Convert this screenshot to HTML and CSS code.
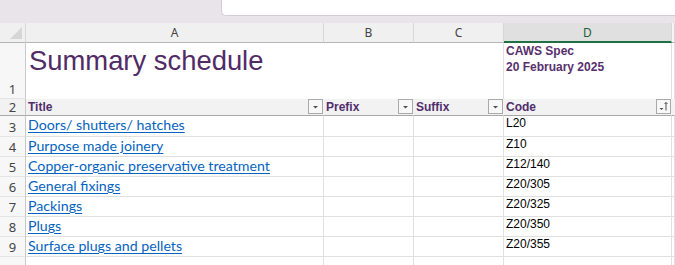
FILE: index.html
```html
<!DOCTYPE html>
<html lang="en">
<head>
<meta charset="utf-8">
<title>Summary schedule</title>
<link rel="stylesheet" href="styles.css">
</head>
<body>
<div class="app">
  <div class="topbar"><div class="formula"></div></div>
  <div class="sheet">
    <div class="row colheads">
      <div class="corner"><svg width="12" height="12" viewBox="0 0 12 12"><polygon points="0,12 12,0 12,12" fill="#d6d6d6"/></svg></div>
      <div class="ch">A</div>
      <div class="ch">B</div>
      <div class="ch">C</div>
      <div class="ch sel">D</div>
      <div class="ch last"></div>
    </div>

    <div class="row r1">
      <div class="rh">1</div>
      <div class="c span3"><span class="title">Summary schedule</span></div>
      <div class="c meta">CAWS Spec<br>20 February 2025</div>
      <div class="c last"></div>
    </div>

    <div class="row r2">
      <div class="rh">2</div>
      <div class="c th"><span>Title</span><span class="flt"><svg width="13" height="13" viewBox="0 0 13 13"><polygon points="4,6 9,6 6.5,8.5" fill="#505050"/></svg></span></div>
      <div class="c th"><span>Prefix</span><span class="flt"><svg width="13" height="13" viewBox="0 0 13 13"><polygon points="4,6 9,6 6.5,8.5" fill="#505050"/></svg></span></div>
      <div class="c th"><span>Suffix</span><span class="flt"><svg width="13" height="13" viewBox="0 0 13 13"><polygon points="4,6 9,6 6.5,8.5" fill="#505050"/></svg></span></div>
      <div class="c th"><span>Code</span><span class="flt"><svg width="13" height="13" viewBox="0 0 13 13"><polygon points="2.5,8 6.5,8 4.5,10" fill="#505050"/><path d="M9 2.5 V10.5 M7.5 4 L9 2.5 L10.5 4" stroke="#505050" stroke-width="1" fill="none"/></svg></span></div>
      <div class="c th last"><span class="peek">N</span></div>
    </div>

    <div class="row r3">
      <div class="rh">3</div>
      <div class="c"><a class="lnk" href="#">Doors/ shutters/ hatches</a></div>
      <div class="c"></div><div class="c"></div>
      <div class="c code">L20</div>
      <div class="c last"></div>
    </div>
    <div class="row">
      <div class="rh">4</div>
      <div class="c"><a class="lnk" href="#">Purpose made joinery</a></div>
      <div class="c"></div><div class="c"></div>
      <div class="c code">Z10</div>
      <div class="c last"></div>
    </div>
    <div class="row">
      <div class="rh">5</div>
      <div class="c"><a class="lnk" href="#">Copper-organic preservative treatment</a></div>
      <div class="c"></div><div class="c"></div>
      <div class="c code">Z12/140</div>
      <div class="c last"></div>
    </div>
    <div class="row">
      <div class="rh">6</div>
      <div class="c"><a class="lnk" href="#">General fixings</a></div>
      <div class="c"></div><div class="c"></div>
      <div class="c code">Z20/305</div>
      <div class="c last"></div>
    </div>
    <div class="row">
      <div class="rh">7</div>
      <div class="c"><a class="lnk" href="#">Packings</a></div>
      <div class="c"></div><div class="c"></div>
      <div class="c code">Z20/325</div>
      <div class="c last"></div>
    </div>
    <div class="row">
      <div class="rh">8</div>
      <div class="c"><a class="lnk" href="#">Plugs</a></div>
      <div class="c"></div><div class="c"></div>
      <div class="c code">Z20/350</div>
      <div class="c last"></div>
    </div>
    <div class="row">
      <div class="rh">9</div>
      <div class="c"><a class="lnk" href="#">Surface plugs and pellets</a></div>
      <div class="c"></div><div class="c"></div>
      <div class="c code">Z20/355</div>
      <div class="c last"></div>
    </div>
    <div class="row">
      <div class="rh top">10</div>
      <div class="c"></div>
      <div class="c"></div><div class="c"></div>
      <div class="c"></div>
      <div class="c last"></div>
    </div>
  </div>
</div>
</body>
</html>
```
FILE: styles.css
```css
* { box-sizing: border-box; }
html, body { margin: 0; padding: 0; }
body {
  width: 675px;
  height: 265px;
  overflow: hidden;
  background: #ffffff;
  font-family: "Liberation Sans", Arial, sans-serif;
}
.app { width: 675px; height: 265px; overflow: hidden; }

.topbar {
  height: 23px;
  background: #e9e4ea;
  padding-left: 221px;
}
.formula {
  height: 16px;
  background: #ffffff;
  border-left: 1px solid #d3ccd5;
  border-bottom: 1px solid #d3ccd5;
  border-bottom-left-radius: 5px;
}

.row {
  display: grid;
  grid-template-columns: 26px 298px 90px 90px 168px 1fr;
  height: 20px;
}
.row > div {
  border-right: 1px solid #e0e0e0;
  border-bottom: 1px solid #e0e0e0;
  overflow: hidden;
  white-space: nowrap;
}

/* column headers */
.colheads { height: 20px; background: #f0f0f0; }
.colheads > div {
  border-right: 1px solid #d7d7d7;
  border-bottom: 1px solid #b5b5b5;
}
.corner {
  display: flex;
  align-items: flex-end;
  justify-content: flex-end;
  padding: 0 3px 3px 0;
  background: #f0f0f0;
}
.ch {
  font-family: "Noto Sans", "Liberation Sans", sans-serif;
  font-size: 12px;
  line-height: 19px;
  color: #444444;
  text-align: center;
}
.colheads .sel {
  background: #e0e0e0;
  color: #1b5e38;
  border-bottom: 2px solid #1e7145;
}
.colheads .last { background: #f5f5f5; }

/* row headers */
.row > .rh {
  background: #f7f7f7;
  border-right: 1px solid #c9c9c9;
  border-bottom: 1px solid #e4e4e4;
  font-family: "Noto Sans", "Liberation Sans", sans-serif;
  font-size: 13px;
  color: #444444;
  display: flex;
  justify-content: center;
  align-items: flex-end;
  line-height: 16px;
  padding-bottom: 1px;
}
.row > .rh.top { align-items: flex-start; padding-top: 5px; }

/* row 1 */
.r1 { height: 56px; }
.r1 > div { border-bottom: none; }
.r1 > .span3 { grid-column: span 3; padding: 2px 0 0 3px; }
.title {
  font-size: 27.4px;
  line-height: 32px;
  color: #512b66;
}
.meta {
  font-size: 12px;
  font-weight: bold;
  line-height: 16px;
  color: #57306d;
  padding-left: 2px;
}

/* row 2: table header */
.r2 { height: 17px; }
.r2 > div {
  background: #f2f2f2;
  border-right-color: #f2f2f2;
  border-bottom: 1px solid #a8a8a8;
}
.row.r2 > .rh {
  border-bottom: 1px solid #a8a8a8;
  background: #f2f2f2;
  border-right-color: #c9c9c9;
  padding-bottom: 0;
  line-height: 15px;
}
.th {
  display: flex;
  justify-content: space-between;
  align-items: flex-start;
  padding-left: 2px;
  font-size: 12px;
  font-weight: bold;
  color: #512d6d;
  line-height: 16px;
}
.flt {
  width: 15px;
  height: 15px;
  border: 1px solid #a9a9a9;
  background: #f8f8f8;
  display: flex;
  align-items: center;
  justify-content: center;
}
.r2 > .last { background: #f2f2f2; }

/* data rows */
.r3 { height: 21px; }
.c { padding-left: 2px; }
.lnk {
  font-family: Lato, "Open Sans", sans-serif;
  font-size: 14.2px;
  line-height: 15px;
  color: #0563c1;
  text-decoration: underline;
  text-underline-offset: 2px;
  display: inline-block;
  padding-top: 1px;
}
.code {
  font-size: 12px;
  line-height: 15px;
  color: #000000;
}
```
